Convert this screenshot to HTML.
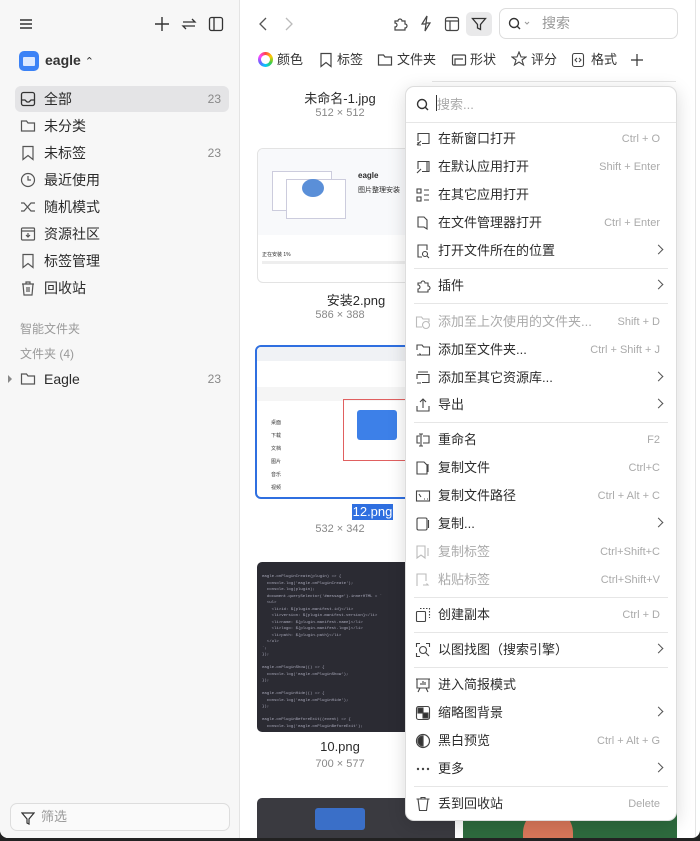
<!DOCTYPE html>
<html><head><meta charset="utf-8"><style>
*{margin:0;padding:0;box-sizing:border-box}
body{width:700px;height:841px;overflow:hidden;background:#222;font-family:"Liberation Sans","Noto Sans CJK SC",sans-serif;color:#2b2b2b;position:relative}
.win{position:absolute;left:0;top:0;width:700px;height:838px;background:#fff;border-radius:0 0 8px 8px;overflow:hidden}
.side{position:absolute;left:0;top:0;width:240px;height:838px;background:#f7f7f7;border-right:1px solid #e4e4e4}
.abs{position:absolute}
.si{position:absolute;left:15px;width:214px;height:26px;font-size:14px;line-height:26px;padding-left:29px}
.si .n{position:absolute;right:8px;top:0;font-size:12px;color:#888}
.si svg{position:absolute;left:5px;top:5px}
.menu{position:absolute;left:405px;top:86px;width:272px;height:735px;background:#fff;border:1px solid #ddd;border-radius:9px;box-shadow:0 4px 18px rgba(0,0,0,.15)}
.mi{position:absolute;left:0;width:270px;height:28px;font-size:13px;line-height:28px;padding-left:32px;color:#2b2b2b}
.mi.d{color:#aaa}
.mi .k{position:absolute;right:16px;top:0;font-size:11px;color:#aaa}
.mi .a{position:absolute;right:14px;top:9px;width:7px;height:7px;border-right:1.3px solid #555;border-top:1.3px solid #555;transform:rotate(45deg)}
.mi svg{position:absolute;left:9px;top:6px}
.sep{position:absolute;left:8px;width:254px;height:1px;background:#e6e6e6}
.cap{position:absolute;text-align:center;font-size:13px}
.dim{position:absolute;text-align:center;font-size:11px;color:#888}
.tb{position:absolute;top:51px;font-size:13px;color:#333;line-height:18px}
</style></head><body>
<div class="win">
<div class="side">
 <svg class="abs" style="left:19px;top:17px" width="14" height="14" stroke="#333" stroke-width="1.4"><path d="M1 3h12M1 7h12M1 11h12"/></svg>
 <svg class="abs" style="left:154px;top:16px" width="16" height="16" stroke="#333" stroke-width="1.4"><path d="M8 1v14M1 8h14"/></svg>
 <svg class="abs" style="left:181px;top:16px" width="16" height="16" stroke="#333" stroke-width="1.3" fill="none"><path d="M2 6h12l-3-3M14 10H2l3 3"/></svg>
 <svg class="abs" style="left:208px;top:16px" width="16" height="16" stroke="#333" stroke-width="1.3" fill="none"><rect x="1.5" y="1.5" width="13" height="13" rx="2"/><path d="M6 2v12"/></svg>
 <div class="abs" style="left:19px;top:51px;width:20px;height:20px;border-radius:5px;background:#3b82f6"><div style="position:absolute;left:4px;top:6px;width:12px;height:9px;background:#dbe8ff;border-radius:1px"></div></div>
 <div class="abs" style="left:45px;top:52px;font-size:14px;font-weight:bold;color:#333">eagle <span style="font-weight:normal;font-size:11px">⌃</span></div>
 <div class="si" style="top:86px;background:#e4e4e6;border-radius:6px"><svg width="16" height="16" fill="none" stroke="#333" stroke-width="1.3"><rect x="1.5" y="1.5" width="13" height="13" rx="2"/><path d="M2 9h3l2 2h2l2-2h3"/></svg>全部<span class="n">23</span></div>
 <div class="si" style="top:113px"><svg width="16" height="16" fill="none" stroke="#555" stroke-width="1.2"><path d="M1.5 3h5l1.5 2h6.5v8H1.5z"/></svg>未分类</div>
 <div class="si" style="top:140px"><svg width="16" height="16" fill="none" stroke="#555" stroke-width="1.2"><path d="M3 1.5h10v13l-5-4-5 4z"/></svg>未标签<span class="n">23</span></div>
 <div class="si" style="top:167px"><svg width="16" height="16" fill="none" stroke="#555" stroke-width="1.2"><circle cx="8" cy="8" r="6.5"/><path d="M8 4v4h3"/></svg>最近使用</div>
 <div class="si" style="top:194px"><svg width="16" height="16" fill="none" stroke="#555" stroke-width="1.2"><path d="M1 4h3l7 8h4M1 12h3l7-8h4"/></svg>随机模式</div>
 <div class="si" style="top:221px"><svg width="16" height="16" fill="none" stroke="#555" stroke-width="1.2"><rect x="1.5" y="2" width="13" height="12" rx="1"/><path d="M1.5 5h13M8 7v4M6 9l2 2 2-2"/></svg>资源社区</div>
 <div class="si" style="top:248px"><svg width="16" height="16" fill="none" stroke="#555" stroke-width="1.2"><path d="M3 1.5h10v13l-5-4-5 4z"/></svg>标签管理</div>
 <div class="si" style="top:275px"><svg width="16" height="16" fill="none" stroke="#555" stroke-width="1.2"><path d="M2 4h12M6 4V2h4v2M3 4l1 11h8l1-11M7 7v5M9 7v5"/></svg>回收站</div>
 <div class="abs" style="left:20px;top:320px;font-size:12px;color:#999">智能文件夹</div>
 <div class="abs" style="left:20px;top:345px;font-size:12px;color:#999">文件夹 (4)</div>
 <div class="abs" style="left:8px;top:375px;width:0;height:0;border-left:4px solid #888;border-top:4px solid transparent;border-bottom:4px solid transparent"></div>
 <div class="si" style="top:366px"><svg width="16" height="16" fill="none" stroke="#555" stroke-width="1.2"><path d="M1.5 3h5l1.5 2h6.5v8H1.5z"/></svg>Eagle<span class="n">23</span></div>
 <div class="abs" style="left:10px;top:803px;width:220px;height:28px;border:1px solid #ddd;border-radius:7px;background:#fafafa;font-size:13px;color:#999;line-height:26px;padding-left:30px"><svg class="abs" style="left:10px;top:7px" width="14" height="14" fill="none" stroke="#333" stroke-width="1.2"><path d="M1 2h12L8 8v5l-2-1V8z"/></svg>筛选</div>
</div>
<svg class="abs" style="left:257px;top:16px" width="12" height="16" fill="none" stroke="#555" stroke-width="1.3"><path d="M9 2L3 8l6 6"/></svg>
<svg class="abs" style="left:283px;top:16px" width="12" height="16" fill="none" stroke="#bbb" stroke-width="1.3"><path d="M3 2l6 6-6 6"/></svg>
<svg class="abs" style="left:392px;top:15px" width="17" height="17" fill="none" stroke="#444" stroke-width="1.2"><path d="M3 6h3a2 2 0 1 1 4 0h3v3a2 2 0 1 1 0 4v2H3v-3a2 2 0 1 0 0-4z"/></svg>
<svg class="abs" style="left:419px;top:15px" width="14" height="17" fill="none" stroke="#444" stroke-width="1.2"><path d="M8 1L3 9h4l-1 7 5-8H7z"/></svg>
<svg class="abs" style="left:444px;top:16px" width="16" height="16" fill="none" stroke="#444" stroke-width="1.2"><rect x="1.5" y="1.5" width="13" height="13" rx="2"/><path d="M1.5 5h13M6 5v9.5"/></svg>
<div class="abs" style="left:466px;top:12px;width:26px;height:24px;background:#e9e9ea;border-radius:5px"><svg class="abs" style="left:5px;top:4px" width="16" height="16" fill="none" stroke="#333" stroke-width="1.3"><path d="M1.5 2.5h13L9.5 8.5v5l-3-1.5V8.5z"/></svg></div>
<div class="abs" style="left:499px;top:8px;width:179px;height:31px;border:1px solid #ddd;border-radius:7px;font-size:14px;color:#999;line-height:29px;padding-left:42px">搜索<svg class="abs" style="left:8px;top:8px" width="28" height="14" fill="none" stroke="#333" stroke-width="1.4"><circle cx="6" cy="6" r="4.5"/><path d="M9 9l3 3"/><path d="M17 5l2 2 2-2" stroke="#999" stroke-width="1"/></svg></div>
<div class="abs" style="left:258px;top:52px;width:15px;height:15px;border-radius:50%;background:conic-gradient(#f44,#fc0,#4c4,#0cf,#66f,#f4f,#f44)"><div style="position:absolute;left:3px;top:3px;width:9px;height:9px;border-radius:50%;background:#fff"></div></div>
<div class="tb" style="left:277px">颜色</div>
<svg class="abs" style="left:319px;top:52px" width="14" height="16" fill="none" stroke="#444" stroke-width="1.2"><path d="M2 1.5h10v13l-5-4-5 4z"/></svg><div class="tb" style="left:337px">标签</div>
<svg class="abs" style="left:377px;top:52px" width="16" height="16" fill="none" stroke="#444" stroke-width="1.2"><path d="M1.5 3h5l1.5 2h6.5v8H1.5z"/></svg><div class="tb" style="left:397px">文件夹</div>
<svg class="abs" style="left:451px;top:52px" width="16" height="16" fill="none" stroke="#444" stroke-width="1.2"><rect x="1.5" y="3" width="13" height="10" rx="1"/><path d="M4 13V7h8"/></svg><div class="tb" style="left:470px">形状</div>
<svg class="abs" style="left:511px;top:51px" width="16" height="16" fill="none" stroke="#444" stroke-width="1.1"><path d="M8 1l2 5h5l-4 3 1.5 5L8 11l-4.5 3L5 9 1 6h5z"/></svg><div class="tb" style="left:531px">评分</div>
<svg class="abs" style="left:571px;top:52px" width="14" height="16" fill="none" stroke="#444" stroke-width="1.1"><rect x="1.5" y="1.5" width="11" height="13" rx="2"/><path d="M6 6L4 8l2 2M8 6l2 2-2 2"/></svg><div class="tb" style="left:591px">格式</div>
<svg class="abs" style="left:630px;top:53px" width="14" height="14" stroke="#333" stroke-width="1.2"><path d="M7 1v12M1 7h12"/></svg>
<div class="abs" style="left:432px;top:81px;width:244px;height:1px;background:#e5e5e5"></div>
<div class="cap" style="left:258px;top:88px;width:164px">未命名-1.jpg</div>
<div class="dim" style="left:258px;top:107px;width:164px">512 × 512</div>
<div class="abs" style="left:257px;top:148px;width:160px;height:135px;border:1px solid #e3e3e3;border-radius:6px;background:#fff;overflow:hidden">
 <div style="position:absolute;left:0;top:0;width:160px;height:86px;background:#f8f9fb"></div>
 <div style="position:absolute;left:14px;top:22px;width:60px;height:40px;border:1px solid #ccd;background:#fff"></div>
 <div style="position:absolute;left:28px;top:30px;width:60px;height:40px;border:1px solid #ccd;background:#fff"></div>
 <div style="position:absolute;left:44px;top:30px;width:22px;height:18px;border-radius:50%;background:#5a8fd8"></div>
 <div style="position:absolute;left:100px;top:22px;font-size:8px;font-weight:bold">eagle</div>
 <div style="position:absolute;left:100px;top:36px;font-size:7px">图片整理安装</div>
 <div style="position:absolute;left:4px;top:102px;font-size:5px">正在安装 1%</div>
 <div style="position:absolute;left:4px;top:112px;width:150px;height:3px;background:#eee"></div>
</div>
<div class="cap" style="left:258px;top:290px;width:196px">安装2.png</div>
<div class="dim" style="left:258px;top:309px;width:164px">586 × 388</div>
<div class="abs" style="left:255px;top:345px;width:160px;height:154px;border:2px solid #2f6fe0;border-radius:6px;background:#fff;overflow:hidden">
 <div style="position:absolute;left:0;top:0;width:160px;height:14px;background:#f0f2f5"></div>
 <div style="position:absolute;left:0;top:40px;width:160px;height:14px;background:#f5f5f5"></div>
 <div style="position:absolute;left:86px;top:52px;width:70px;height:62px;border:1.5px solid #e06060"></div>
 <div style="position:absolute;left:100px;top:63px;width:40px;height:30px;background:#3d80e8;border-radius:3px"></div>
 <div style="position:absolute;left:14px;top:70px;font-size:5px;line-height:13px;color:#333">桌面<br>下载<br>文档<br>图片<br>音乐<br>视频</div>
</div>
<div class="abs" style="left:352px;top:504px;width:41px;height:16px;background:#2f6fe0;color:#fff;font-size:13px;line-height:16px;text-align:center">12.png</div>
<div class="dim" style="left:258px;top:523px;width:164px">532 × 342</div>
<div class="abs" style="left:257px;top:562px;width:160px;height:170px;background:#2b2b33;border-radius:5px 0 0 5px;overflow:hidden;font-family:'Liberation Mono',monospace;font-size:4px;color:#aab;line-height:6.5px;padding:12px 5px">eagle.onPluginCreate(plugin) => {<br>&nbsp; console.log('eagle.onPluginCreate');<br>&nbsp; console.log(plugin);<br>&nbsp; document.querySelector('#message').innerHTML = `<br>&nbsp; &lt;ul&gt;<br>&nbsp;&nbsp;&nbsp; &lt;li&gt;id: ${plugin.manifest.id}&lt;/li&gt;<br>&nbsp;&nbsp;&nbsp; &lt;li&gt;version: ${plugin.manifest.version}&lt;/li&gt;<br>&nbsp;&nbsp;&nbsp; &lt;li&gt;name: ${plugin.manifest.name}&lt;/li&gt;<br>&nbsp;&nbsp;&nbsp; &lt;li&gt;logo: ${plugin.manifest.logo}&lt;/li&gt;<br>&nbsp;&nbsp;&nbsp; &lt;li&gt;path: ${plugin.path}&lt;/li&gt;<br>&nbsp; &lt;/ul&gt;<br>`;<br>});<br><br>eagle.onPluginShow(() => {<br>&nbsp; console.log('eagle.onPluginShow');<br>});<br><br>eagle.onPluginHide(() => {<br>&nbsp; console.log('eagle.onPluginHide');<br>});<br><br>eagle.onPluginBeforeExit((event) => {<br>&nbsp; console.log('eagle.onPluginBeforeExit');</div>
<div class="cap" style="left:258px;top:739px;width:164px">10.png</div>
<div class="dim" style="left:258px;top:758px;width:164px">700 × 577</div>
<div class="abs" style="left:257px;top:798px;width:198px;height:40px;background:#3a3a40;border-radius:5px 5px 0 0"><div style="position:absolute;left:58px;top:10px;width:50px;height:22px;background:#3a6fc8;border-radius:3px"></div></div>
<div class="abs" style="left:463px;top:798px;width:214px;height:40px;background:#2e6b3e"><div style="position:absolute;left:60px;top:10px;width:50px;height:30px;background:#d9775a;border-radius:25px 25px 0 0"></div></div>
<div class="abs" style="left:695px;top:0;width:1px;height:838px;background:#e5e5e5"></div>
<div class="menu">
 <svg class="abs" style="left:10px;top:11px" width="14" height="14" fill="none" stroke="#333" stroke-width="1.4"><circle cx="6" cy="6" r="4.5"/><path d="M9 9l3 3"/></svg>
 <div class="abs" style="left:30px;top:8px;width:1px;height:16px;background:#333"></div>
 <div class="abs" style="left:31px;top:7px;font-size:13px;color:#aaa">搜索...</div>
 <div class="sep" style="left:0;width:270px;top:35px"></div>
 <div class="mi" style="top:38px"><svg width="16" height="16" fill="none" stroke="#444" stroke-width="1.1"><path d="M3 10V2.5h11v10H7M2 14l4-4M3 11v3h3"/></svg>在新窗口打开<span class="k">Ctrl + O</span></div>
 <div class="mi" style="top:66px"><svg width="16" height="16" fill="none" stroke="#444" stroke-width="1.1"><path d="M3 10V2.5h9v10H7M12 2.5h2v10h-2M2 14l4-4"/></svg>在默认应用打开<span class="k">Shift + Enter</span></div>
 <div class="mi" style="top:94px"><svg width="16" height="16" fill="none" stroke="#444" stroke-width="1.1"><rect x="2" y="2" width="4" height="4"/><rect x="2" y="10" width="4" height="4"/><path d="M9 3h5M9 8h5M9 13h5"/></svg>在其它应用打开</div>
 <div class="mi" style="top:122px"><svg width="16" height="16" fill="none" stroke="#444" stroke-width="1.1"><path d="M3 2h6l3 3v9l-3-2H3z"/></svg>在文件管理器打开<span class="k">Ctrl + Enter</span></div>
 <div class="mi" style="top:150px"><svg width="16" height="16" fill="none" stroke="#444" stroke-width="1.1"><path d="M7 14H3V2h9v5"/><circle cx="10" cy="11" r="2.5"/><path d="M12 13l2 2"/></svg>打开文件所在的位置<span class="a"></span></div>
 <div class="sep" style="top:181px"></div>
 <div class="mi" style="top:185px"><svg width="16" height="16" fill="none" stroke="#444" stroke-width="1.1"><path d="M3 5h3a2 2 0 1 1 4 0h3v3a2 2 0 1 1 0 4v2H3v-3a2 2 0 1 0 0-4z"/></svg>插件<span class="a"></span></div>
 <div class="sep" style="top:216px"></div>
 <div class="mi d" style="top:221px"><svg width="16" height="16" fill="none" stroke="#bbb" stroke-width="1.1"><path d="M7 13H1.5V3h5l1.5 2h6v3"/><circle cx="11" cy="11" r="3.5"/></svg>添加至上次使用的文件夹...<span class="k">Shift + D</span></div>
 <div class="mi" style="top:249px"><svg width="16" height="16" fill="none" stroke="#444" stroke-width="1.1"><path d="M2 8V3h5l1.5 2h6v8H7M2 13h4l-1.5-1.5"/></svg>添加至文件夹...<span class="k">Ctrl + Shift + J</span></div>
 <div class="mi" style="top:277px"><svg width="16" height="16" fill="none" stroke="#444" stroke-width="1.1"><path d="M3 2h10M2 9V4.5h12v8H7M2 13h4"/></svg>添加至其它资源库...<span class="a"></span></div>
 <div class="mi" style="top:304px"><svg width="16" height="16" fill="none" stroke="#444" stroke-width="1.1"><path d="M2 9v5h12V9M8 11V2M5 5l3-3 3 3"/></svg>导出<span class="a"></span></div>
 <div class="sep" style="top:335px"></div>
 <div class="mi" style="top:339px"><svg width="16" height="16" fill="none" stroke="#444" stroke-width="1.1"><path d="M5 4H2v7h3M8 4h6v7H8M6 2v12M4 2h4M4 14h4"/></svg>重命名<span class="k">F2</span></div>
 <div class="mi" style="top:367px"><svg width="16" height="16" fill="none" stroke="#444" stroke-width="1.1"><path d="M2 2h7l3 3v9H2zM13 4v8"/></svg>复制文件<span class="k">Ctrl+C</span></div>
 <div class="mi" style="top:395px"><svg width="16" height="16" fill="none" stroke="#444" stroke-width="1.1"><rect x="1.5" y="3" width="13" height="10"/><path d="M4 6l2 3M9 11h1M12 11h1"/></svg>复制文件路径<span class="k">Ctrl + Alt + C</span></div>
 <div class="mi" style="top:423px"><svg width="16" height="16" fill="none" stroke="#444" stroke-width="1.1"><rect x="2" y="2" width="10" height="12" rx="1.5"/><path d="M13.5 4v8"/></svg>复制...<span class="a"></span></div>
 <div class="mi d" style="top:451px"><svg width="16" height="16" fill="none" stroke="#bbb" stroke-width="1.1"><path d="M2 2h8v12l-4-3-4 3zM13 4v8"/></svg>复制标签<span class="k">Ctrl+Shift+C</span></div>
 <div class="mi d" style="top:479px"><svg width="16" height="16" fill="none" stroke="#bbb" stroke-width="1.1"><path d="M2 14V2h9v7M8 13h5l-1.5-1.5"/></svg>粘贴标签<span class="k">Ctrl+Shift+V</span></div>
 <div class="sep" style="top:510px"></div>
 <div class="mi" style="top:514px"><svg width="16" height="16" fill="none" stroke="#444" stroke-width="1.1"><rect x="1.5" y="4.5" width="9" height="10" rx="1"/><path d="M5 1.5h9.5V11" stroke-dasharray="1.5 1.5"/></svg>创建副本<span class="k">Ctrl + D</span></div>
 <div class="sep" style="top:545px"></div>
 <div class="mi" style="top:549px"><svg width="16" height="16" fill="none" stroke="#444" stroke-width="1.1"><path d="M1.5 5V1.5H5M11 1.5h3.5V5M1.5 11v3.5H5"/><circle cx="8" cy="8" r="3.5"/><path d="M10.5 10.5l3.5 3.5"/></svg>以图找图（搜索引擎）<span class="a"></span></div>
 <div class="sep" style="top:580px"></div>
 <div class="mi" style="top:584px"><svg width="16" height="16" fill="none" stroke="#444" stroke-width="1.1"><path d="M1 2h14M2 2v9h12V2M5 11l-2 4M11 11l2 4M6 8V6M8 8V4M10 8V5"/></svg>进入简报模式</div>
 <div class="mi" style="top:612px"><svg width="16" height="16" stroke="#444" stroke-width="1.1" fill="none"><rect x="1.5" y="1.5" width="13" height="13" rx="2"/><rect x="3" y="3" width="5" height="5" fill="#333"/><rect x="8" y="8" width="5" height="5" fill="#333"/></svg>缩略图背景<span class="a"></span></div>
 <div class="mi" style="top:640px"><svg width="16" height="16" stroke="#444" stroke-width="1.2" fill="none"><circle cx="8" cy="8" r="6.5"/><path d="M8 3a5 5 0 0 0 0 10z" fill="#333"/></svg>黑白预览<span class="k">Ctrl + Alt + G</span></div>
 <div class="mi" style="top:668px"><svg width="16" height="16" fill="#444"><circle cx="3" cy="8" r="1.2"/><circle cx="8" cy="8" r="1.2"/><circle cx="13" cy="8" r="1.2"/></svg>更多<span class="a"></span></div>
 <div class="sep" style="top:699px"></div>
 <div class="mi" style="top:703px"><svg width="16" height="16" fill="none" stroke="#444" stroke-width="1.1"><path d="M1.5 3h13M6 3V1.5h4V3M3 3l1.5 11.5h7L13 3"/></svg>丢到回收站<span class="k">Delete</span></div>
</div>
</div>
</body></html>
